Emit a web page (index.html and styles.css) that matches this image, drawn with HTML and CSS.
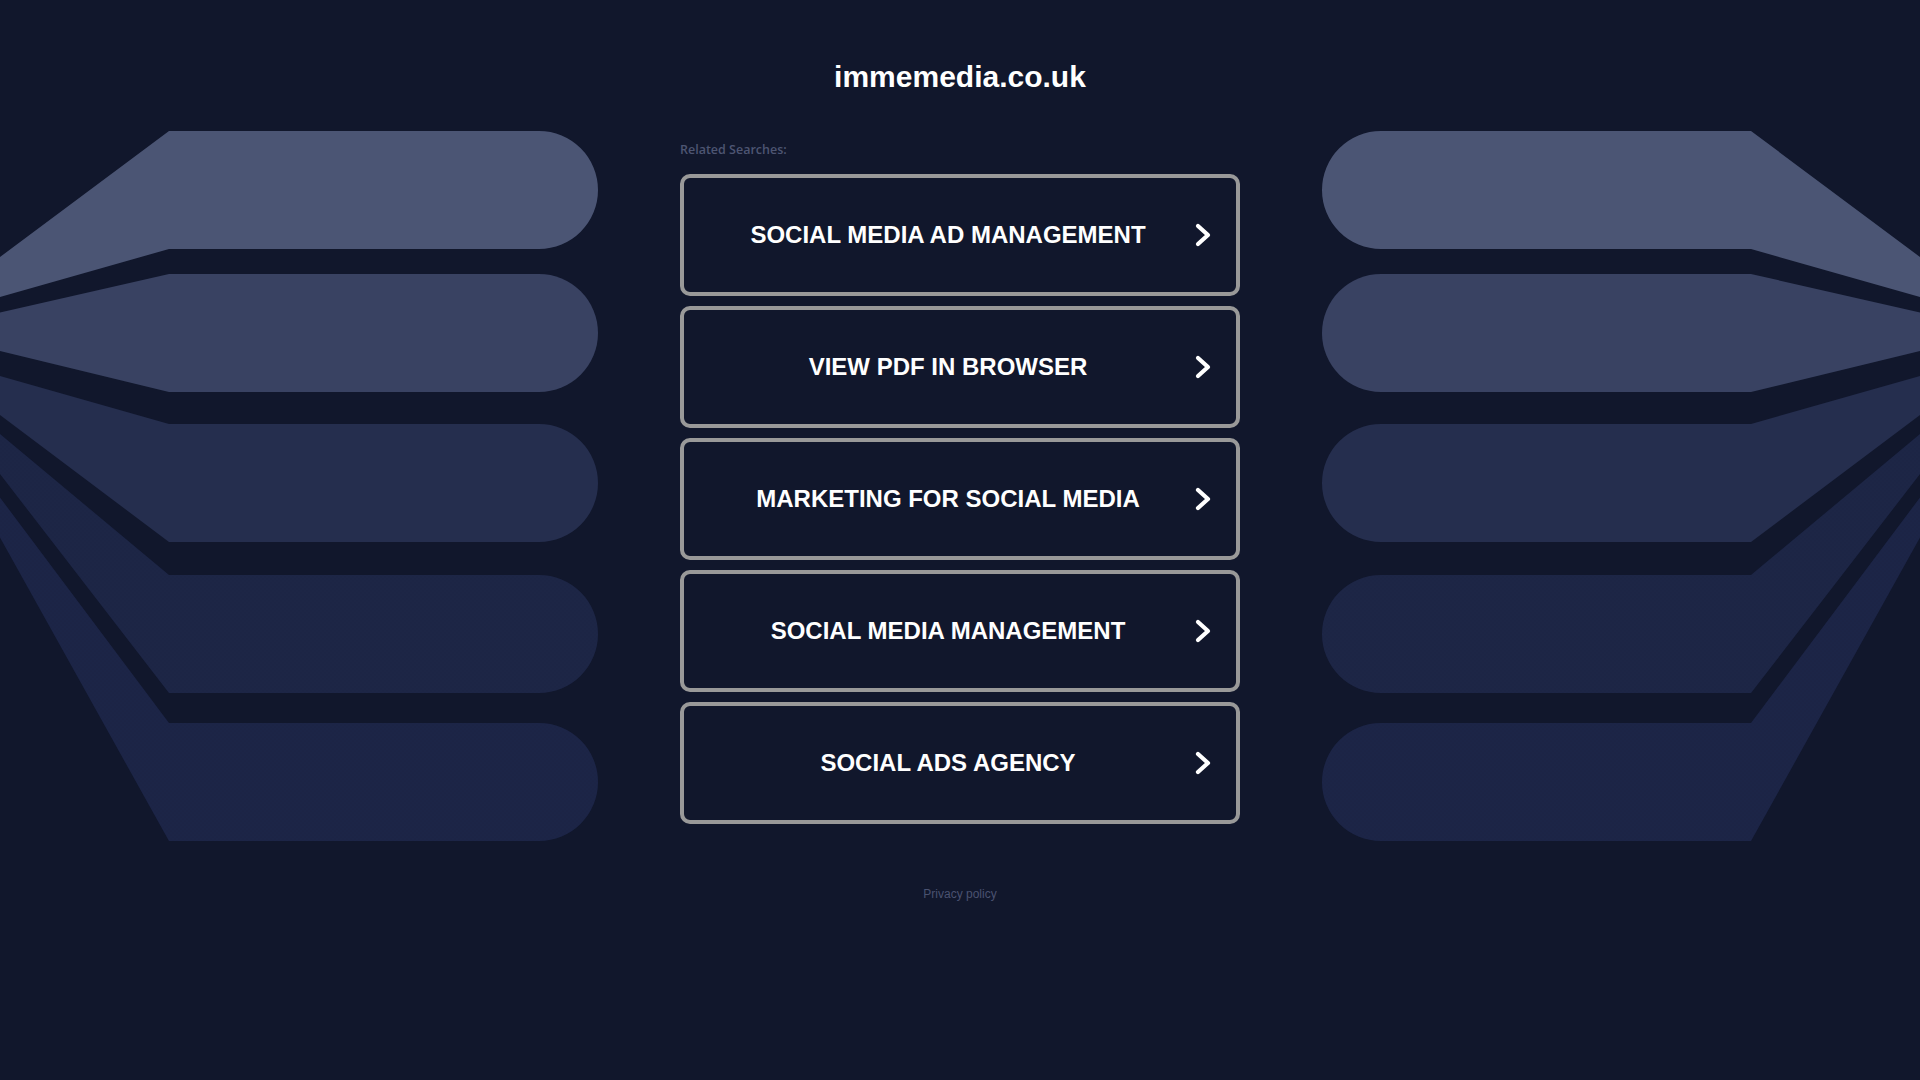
FILE: index.html
```html
<!DOCTYPE html>
<html lang="en">
<head>
<meta charset="utf-8">
<title>immemedia.co.uk</title>
<link rel="stylesheet" href="styles.css">
</head>
<body>
<header class="header">
  <h1 class="domain">immemedia.co.uk</h1>
</header>
<main class="stage">
  <svg class="deco deco-left" viewBox="0 0 598 716" width="598" height="716" aria-hidden="true">
    <defs>
      <pattern id="dotsL" width="4" height="4" patternUnits="userSpaceOnUse">
        <circle cx="1" cy="1" r="0.5" fill="#18203d"/>
        <circle cx="3" cy="3" r="0.5" fill="#18203d"/>
      </pattern>
    </defs>
    <path fill="#4b5574" d="M169,3 H539 A59,59 0 0 1 539,121 H169 L0,169 V129 Z"/>
    <path fill="#394262" d="M169,146 H539 A59,59 0 0 1 539,264 H169 L0,223 V184.5 Z"/>
    <path fill="#252e4e" d="M169,296 H539 A59,59 0 0 1 539,414 H169 L0,287 V248 Z"/>
    <path fill="#1d2646" d="M169,447 H539 A59,59 0 0 1 539,565 H169 L0,346 V306 Z"/>
    <path fill="url(#dotsL)" d="M169,447 H539 A59,59 0 0 1 539,565 H169 L0,346 V306 Z"/>
    <path fill="#1c2547" d="M169,595 H539 A59,59 0 0 1 539,713 H169 L0,409.6 V369.5 Z"/>
    <path fill="url(#dotsL)" d="M169,595 H539 A59,59 0 0 1 539,713 H169 L0,409.6 V369.5 Z"/>
  </svg>

  <section class="searches">
    <p class="label">Related Searches:</p>
    <ul class="list">
      <li><a class="btn" href="#"><span class="btn-text">SOCIAL MEDIA AD MANAGEMENT</span><svg class="chev" viewBox="0 0 16 24" width="16" height="24"><path d="M3 3 L13 12 L3 21" /></svg></a></li>
      <li><a class="btn" href="#"><span class="btn-text">VIEW PDF IN BROWSER</span><svg class="chev" viewBox="0 0 16 24" width="16" height="24"><path d="M3 3 L13 12 L3 21" /></svg></a></li>
      <li><a class="btn" href="#"><span class="btn-text">MARKETING FOR SOCIAL MEDIA</span><svg class="chev" viewBox="0 0 16 24" width="16" height="24"><path d="M3 3 L13 12 L3 21" /></svg></a></li>
      <li><a class="btn" href="#"><span class="btn-text">SOCIAL MEDIA MANAGEMENT</span><svg class="chev" viewBox="0 0 16 24" width="16" height="24"><path d="M3 3 L13 12 L3 21" /></svg></a></li>
      <li><a class="btn" href="#"><span class="btn-text">SOCIAL ADS AGENCY</span><svg class="chev" viewBox="0 0 16 24" width="16" height="24"><path d="M3 3 L13 12 L3 21" /></svg></a></li>
    </ul>
  </section>

  <svg class="deco deco-right" viewBox="0 0 598 716" width="598" height="716" aria-hidden="true">
    <defs>
      <pattern id="dotsR" width="4" height="4" patternUnits="userSpaceOnUse">
        <circle cx="1" cy="1" r="0.5" fill="#18203d"/>
        <circle cx="3" cy="3" r="0.5" fill="#18203d"/>
      </pattern>
    </defs>
    <g transform="translate(598,0) scale(-1,1)">
      <path fill="#4b5574" d="M169,3 H539 A59,59 0 0 1 539,121 H169 L0,169 V129 Z"/>
      <path fill="#394262" d="M169,146 H539 A59,59 0 0 1 539,264 H169 L0,223 V184.5 Z"/>
      <path fill="#252e4e" d="M169,296 H539 A59,59 0 0 1 539,414 H169 L0,287 V248 Z"/>
      <path fill="#1d2646" d="M169,447 H539 A59,59 0 0 1 539,565 H169 L0,346 V306 Z"/>
      <path fill="url(#dotsR)" d="M169,447 H539 A59,59 0 0 1 539,565 H169 L0,346 V306 Z"/>
      <path fill="#1c2547" d="M169,595 H539 A59,59 0 0 1 539,713 H169 L0,409.6 V369.5 Z"/>
      <path fill="url(#dotsR)" d="M169,595 H539 A59,59 0 0 1 539,713 H169 L0,409.6 V369.5 Z"/>
    </g>
  </svg>
</main>
<footer class="footer">
  <a class="privacy" href="#">Privacy policy</a>
</footer>
</body>
</html>
```
FILE: styles.css
```css
* { box-sizing: border-box; }

html, body {
  margin: 0;
  padding: 0;
  background: #11172c;
  height: 100%;
}

body {
  font-family: "Liberation Sans", Arial, sans-serif;
  color: #fff;
  overflow: hidden;
}

.header {
  height: 128px;
  padding-top: 59px;
  text-align: center;
}

.domain {
  margin: 0;
  font-size: 30px;
  line-height: 36px;
  font-weight: 700;
  color: #fff;
}

.stage {
  display: grid;
  grid-template-columns: 598px 560px 598px;
  column-gap: 82px;
  height: 716px;
}

.deco {
  display: block;
}

.searches {
  padding-top: 14px;
}

.label {
  margin: 0 0 16px 0;
  font-family: "Open Sans", "Liberation Sans", sans-serif;
  font-size: 12.5px;
  line-height: 16px;
  font-weight: 600;
  color: #4d5572;
}

.list {
  list-style: none;
  margin: 0;
  padding: 0;
  display: flex;
  flex-direction: column;
  gap: 10px;
}

.btn {
  display: flex;
  align-items: center;
  height: 122px;
  border: 4px solid #999999;
  border-radius: 10px;
  padding: 0 25px 0 0;
  text-decoration: none;
  color: #fff;
}

.btn-text {
  flex: 1;
  text-align: center;
  padding-left: 17px;
  font-size: 24px;
  font-weight: 700;
  line-height: 28px;
}

.chev {
  display: block;
  flex: none;
}

.chev path {
  fill: none;
  stroke: #fff;
  stroke-width: 4.2;
  stroke-linecap: round;
  stroke-linejoin: round;
}

.footer {
  padding-top: 40px;
  text-align: center;
}

.privacy {
  font-size: 12px;
  line-height: 14px;
  color: #4a5270;
  text-decoration: none;
}
```
